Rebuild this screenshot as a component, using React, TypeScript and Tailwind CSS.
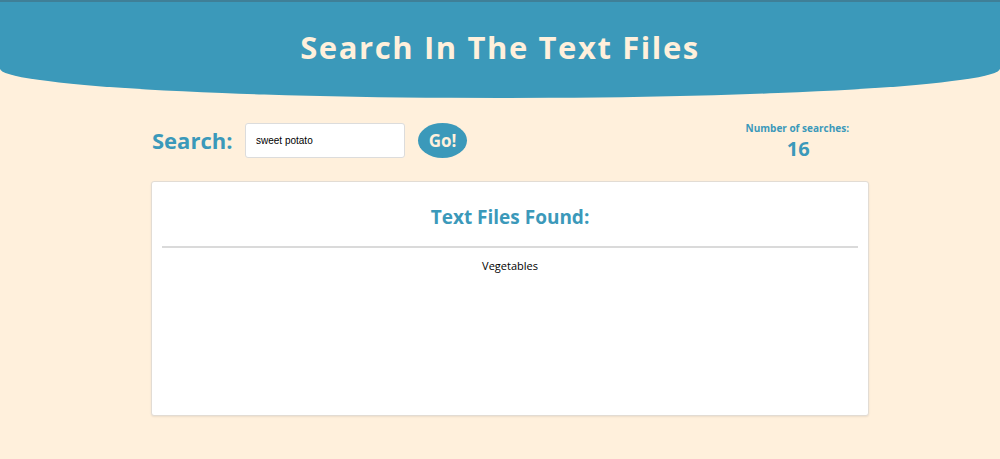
import React from "react";

export default function App() {
  const font = { fontFamily: '"Open Sans", "Noto Sans", sans-serif' };
  return (
    <div className="min-h-[459px] w-full bg-[#fff0dc]" style={font}>
      <header className="h-[98px] bg-[#3b99ba] border-t-2 border-[#3f7f97] rounded-bl-[50%_30%] rounded-br-[50%_30%] flex items-center justify-center pb-[5px]">
        <h1 className="text-[31px] font-bold tracking-[1.6px] text-[#fff0dc] leading-none">
          Search In The Text Files
        </h1>
      </header>
      <main className="w-[718px] ml-[151px]">
        <div className="flex items-center h-[83px] pt-[1px]">
          <div className="flex items-center">
            <span className="text-[22px] font-bold text-[#3b99ba] ml-[1px] w-[93px]">Search:</span>
            <input
              className="w-[160px] h-[35px] bg-white border border-[#dcdcdc] rounded-[3px] px-[10px] pt-[1px] text-[10px] text-black outline-none"
              style={{ fontFamily: '"Liberation Sans", Arial, sans-serif' }}
              defaultValue="sweet potato"
            />
            <button className="ml-[13px] w-[49px] h-[35px] rounded-[50%] bg-[#3b99ba] text-[#fff0dc] text-[17px] font-bold leading-none">
              Go!
            </button>
          </div>
          <div className="ml-auto mr-[20px] flex flex-col items-center pt-[3px]">
            <span className="text-[10px] font-bold text-[#3b99ba] leading-[14px]">Number of searches:</span>
            <span className="text-[20px] font-bold text-[#3b99ba] leading-[28px] pl-[2px]">16</span>
          </div>
        </div>
        <section className="h-[235px] bg-white border border-[#e2dcd4] rounded-[3px] shadow-[0_1px_2px_rgba(0,0,0,0.08)] px-[10px]">
          <h2 className="text-center text-[19px] font-bold text-[#3b99ba] pt-[21px] leading-[28px]">Text Files Found:</h2>
          <hr className="mt-[15px] border-0 h-[2px] bg-[#dadada]" />
          <p className="text-center text-[11px] text-black mt-[10px]">Vegetables</p>
        </section>
      </main>
    </div>
  );
}
